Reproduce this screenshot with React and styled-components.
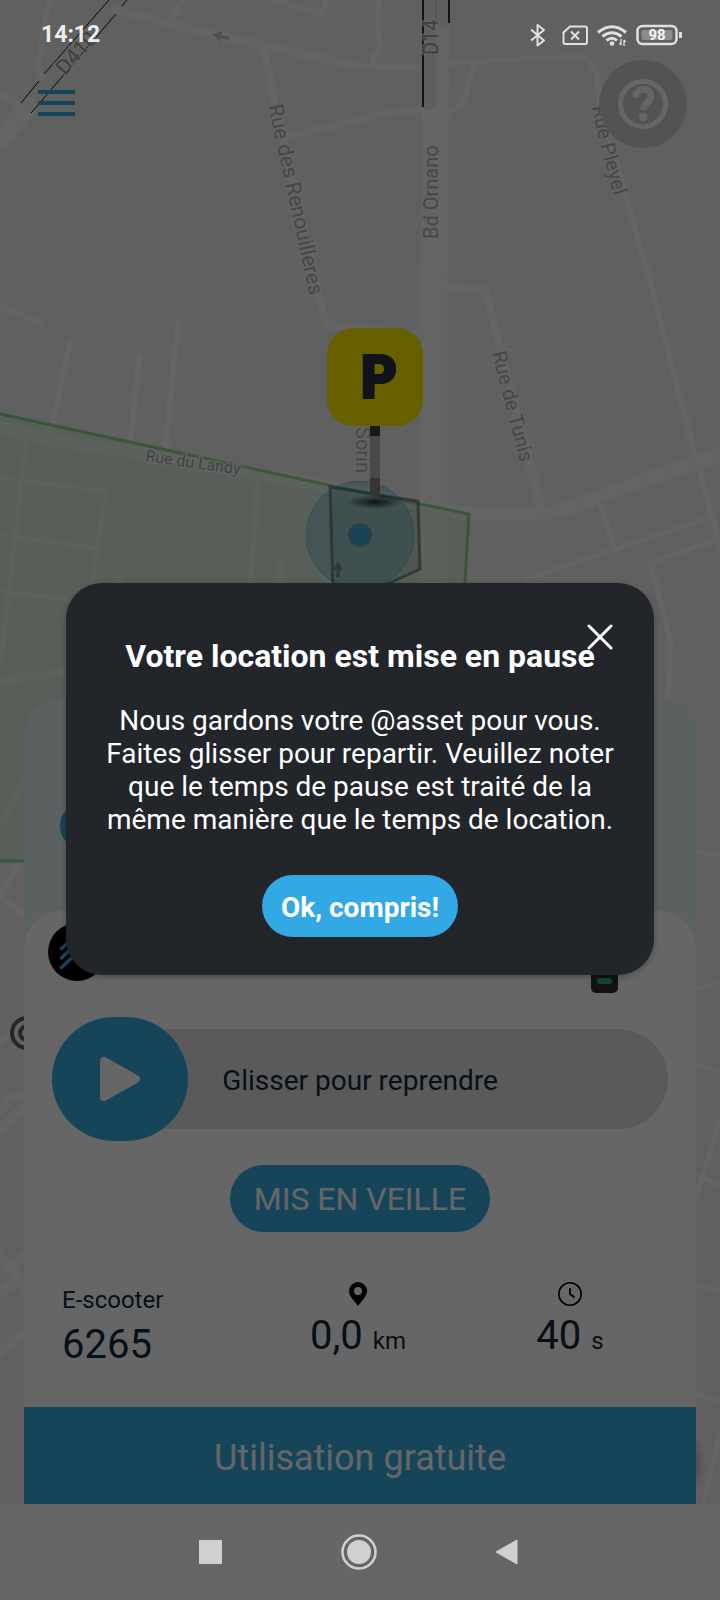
import React, { useState } from "react";
import styled, { createGlobalStyle } from "styled-components";

const GlobalStyle = createGlobalStyle`
  * {
    box-sizing: border-box;
  }

  body {
    margin: 0;
    font-family: Roboto, "Noto Sans", sans-serif;
    background: #ffffff;
  }

  button {
    border: 0;
    padding: 0;
    font-family: inherit;
    cursor: pointer;
  }
`;

const Screen = styled.div`
  display: grid;
  grid-template-columns: minmax(0, 1fr);
  grid-template-rows: 54px 1fr 96px;
  min-height: 100vh;
`;

const MapCanvas = styled.svg`
  grid-area: 1 / 1 / 3 / 2;
  display: block;
  width: 100%;
  height: 0;
  min-height: 100%;
  background: #f1f1f1;
`;

const Content = styled.main`
  grid-area: 2 / 1;
  display: flex;
  flex-direction: column;
  justify-content: space-between;
`;

const TopBar = styled.header`
  display: flex;
  align-items: center;
  justify-content: space-between;
  padding: 6px 33px 0 38px;
`;

const MenuButton = styled.button`
  display: flex;
  flex-direction: column;
  gap: 7px;
  width: 37px;
  padding-bottom: 2px;
  background: none;

  span {
    width: 100%;
    height: 4px;
    background: #32a8e4;
  }
`;

const HelpButton = styled.button`
  display: grid;
  place-items: center;
  width: 88px;
  height: 88px;
  border-radius: 50%;
  background: #d0d0d0;
`;

const Sheet = styled.section`
  margin: 0 24px;
  border-radius: 36px 36px 0 0;
  background: #e4f1f2;
`;

const SheetHead = styled.div`
  padding: 104px 36px 61px;
`;

const Dot = styled.div`
  width: 48px;
  height: 48px;
  border-radius: 50%;
  background: #38ace2;
`;

const Card = styled.div`
  display: flex;
  flex-direction: column;
  gap: 24px;
  padding-top: 12px;
  border-radius: 36px 36px 0 0;
  background: #ffffff;
`;

const VehicleRow = styled.div`
  display: flex;
  align-items: flex-start;
  justify-content: space-between;
  padding: 0 78px 0 24px;
`;

const Swipe = styled.div`
  display: grid;
  align-items: center;
  margin: 0 28px;

  > * {
    grid-area: 1 / 1;
  }

  label,
  svg {
    pointer-events: none;
  }

  label {
    justify-self: center;
    padding-top: 2px;
    font-size: 28px;
    line-height: 33px;
    color: #0f2840;
  }

  svg {
    margin-left: 44px;
  }
`;

const SwipeInput = styled.input`
  appearance: none;
  width: 100%;
  height: 124px;
  margin: 0;
  background: transparent;

  &::-webkit-slider-runnable-track {
    height: 100px;
    border-radius: 50px;
    background: #e1e1e1;
  }

  &::-webkit-slider-thumb {
    appearance: none;
    width: 136px;
    height: 124px;
    margin-top: -12px;
    border-radius: 62px;
    background: #38ace2;
  }
`;

const StateBadge = styled.div`
  align-self: center;
  padding: 15px 24px 14px;
  border-radius: 34px;
  background: #38ace2;
  color: #ffffff;
  font-size: 32px;
  line-height: 38px;
`;

const Stats = styled.div`
  display: grid;
  grid-template-columns: repeat(3, 1fr);
  padding: 26px 20px 39px 16px;
  color: #0f2840;
`;

const Stat = styled.div`
  display: flex;
  flex-direction: column;
  align-items: ${({ $start }) => ($start ? "flex-start" : "center")};
  gap: ${({ $start }) => ($start ? "8px" : "7px")};
  padding: ${({ $start }) => ($start ? "4px 0 0 22px" : "0")};
`;

const StatLabel = styled.div`
  font-size: 24px;
  line-height: 28px;
`;

const StatValue = styled.div`
  font-size: 40px;
  line-height: 46px;

  small {
    font-size: 24px;
  }
`;

const FreeButton = styled.button`
  display: block;
  width: 100%;
  height: 97px;
  padding-top: 4px;
  background: #38ace2;
  color: #ffffff;
  font-size: 36px;
  line-height: 42px;
`;

const NavBackground = styled.div`
  grid-area: 3 / 1;
  background: #ffffff;
`;

const Scrim = styled.div`
  grid-area: 1 / 1 / 4 / 2;
  background: rgba(0, 0, 0, 0.6);
`;

const StatusBar = styled.div`
  grid-area: 1 / 1;
  display: flex;
  align-items: center;
  justify-content: space-between;
  padding: 16px 37px 0 41px;
  color: #ececec;
`;

const Clock = styled.time`
  font-size: 23px;
  font-weight: 700;
  line-height: 28px;
`;

const StatusIcons = styled.div`
  display: flex;
  align-items: center;
`;

const NavBar = styled.nav`
  grid-area: 3 / 1;
  display: flex;
  align-items: center;
  justify-content: center;
  gap: 110px;
  padding-right: 2px;

  button {
    display: grid;
    place-items: center;
    width: 38px;
    height: 38px;
    background: none;
  }
`;

const Dialog = styled.div`
  grid-area: 2 / 1;
  align-self: center;
  display: grid;
  justify-items: center;
  margin: 0 66px;
  padding: 54px 36px 38px;
  border-radius: 36px;
  background: #22252a;
  color: #ffffff;
  text-align: center;
  box-shadow: 0 2px 6px rgba(0, 0, 0, 0.25);

  h1 {
    grid-area: 1 / 1;
    margin: 0;
    font-size: 32px;
    font-weight: 700;
    line-height: 38px;
  }

  p {
    margin: 29px 0 39px;
    font-size: 28px;
    line-height: 33px;
  }
`;

const CloseButton = styled.button`
  grid-area: 1 / 1;
  justify-self: end;
  display: grid;
  place-items: center;
  width: 36px;
  height: 36px;
  margin-top: -18px;
  background: none;
`;

const ConfirmButton = styled.button`
  padding: 2px 19px 0;
  height: 62px;
  border-radius: 31px;
  background: #32a8e4;
  color: #ffffff;
  font-size: 28px;
  font-weight: 700;
  line-height: 33px;
`;

const roads = [
  { w: 18, d: "M28 106 L0 142" },
  { w: 8, d: "M0 92 L22 107" },
  { w: 8, d: "M117 10 L168 24 L262 45 L362 67" },
  { w: 6, d: "M169 22 L184 0" },
  { w: 6, d: "M49 0 L38 68 L43 77" },
  { w: 8, d: "M263 45 L275 103 L318 293 L326 322 Q328 325 334 325 L424 335" },
  { w: 6, d: "M284 137 L360 120 L385 113 L425 110" },
  { w: 6, d: "M265 -3 L316 13 Q322 14 324 8 L326 0" },
  { w: 4, d: "M380 0 L377 16 L380 50 L373 56 V66" },
  { w: 4, d: "M360 67 H424" },
  { w: 27, d: "M436 27 L434 300 V600" },
  { w: 6, d: "M448 63 L475 61 L587 57 L596 72 L601 105 L626 197 L655 300 L695 455 L720 545" },
  { w: 6, d: "M475 61 L465 97 Q461 107 447 113" },
  { w: 8, d: "M447 288 L485 290 L500 350 L529 460 L541 508" },
  { w: 13, d: "M-4 426 L50 440 L160 456 L330 487 L420 505 Q480 520 550 512 Q575 508 610 492 L724 453" },
  { w: 6, d: "M598 498 L615 550" },
  { w: 4, d: "M526 579 L615 549 L708 518" },
  { w: 5, d: "M716 540 L650 563 L671 642 L668 700" },
  { w: 6, d: "M-4 304 L42 323" },
  { w: 6, d: "M70 342 L50 436" },
  { w: 6, d: "M139 357 L130 448" },
  { w: 6, d: "M178 323 L165 454" },
  { w: 4, d: "M26 441 L8 600 L0 667" },
  { w: 4, d: "M0 478 L106 491 L92 585" },
  { w: 4, d: "M0 535 L96 548" },
  { w: 4, d: "M0 591 L70 600" },
  { w: 6, d: "M258 481 L249 600" },
  { w: 6, d: "M281 562 L279 600" },
  { w: 5, d: "M120 577 L118 600" },
  { w: 8, d: "M0 682 Q40 672 80 673" },
  { w: 6, d: "M0 826 L30 770" },
  { w: 6, d: "M22 858 L0 895 L28 918" },
  { w: 6, d: "M0 1042 L26 1022" },
  { w: 8, d: "M0 1130 L26 1105 M0 1112 L10 1098 L26 1094" },
  { w: 9, d: "M-4 1250 L28 1294 M28 1252 L8 1270 M0 1292 L12 1284" },
  { w: 9, d: "M-4 1356 L28 1330" },
  { w: 4, d: "M694 852 L720 855 M694 989 L720 982 M694 1064 L720 1072" },
  { w: 4, d: "M720 1120 L706 1165 L694 1205 M694 1175 L720 1185" },
  { w: 4, d: "M694 1283 L720 1292 M694 1393 L720 1402 M720 1432 L704 1502" },
];

const labels = [
  { id: "d410", text: "D410", size: 21, color: "#9c9c9c", d: "M65 76 L115 21" },
  { id: "d14", text: "D14", size: 20, color: "#9c9c9c", d: "M438 55 V0" },
  { id: "renouilleres", text: "Rue des Renouilleres", size: 21, color: "#b2b2b2", d: "M268 106 Q286 185 317 330" },
  { id: "ornano", text: "Bd Ornano", size: 20, color: "#b2b2b2", d: "M438 239 V100" },
  { id: "pleyel", text: "Rue Pleyel", size: 20, color: "#b2b2b2", d: "M592 107 Q600 150 624 230" },
  { id: "tunis", text: "Rue de Tunis", size: 20, color: "#b2b2b2", d: "M492 353 L530 500" },
  { id: "landy", text: "Rue du Landy", size: 16, color: "#a8a8a8", d: "M145 461 L250 476" },
  { id: "sorin", text: "Sorin", size: 20, color: "#b2b2b2", d: "M356 427 V520" },
];

const CityMap = () => (
  <MapCanvas
    viewBox="0 0 720 1504"
    preserveAspectRatio="xMidYMin slice"
    role="img"
    aria-label="Plan du quartier"
  >
    <defs>
      <radialGradient id="pinShadow">
        <stop offset="0" stopColor="#000" stopOpacity="0.75" />
        <stop offset="1" stopColor="#000" stopOpacity="0" />
      </radialGradient>
      <radialGradient id="fabShadow">
        <stop offset="0.75" stopColor="#000" stopOpacity="0.2" />
        <stop offset="1" stopColor="#000" stopOpacity="0" />
      </radialGradient>
    </defs>

    <g fill="none" stroke="#fbfbfb" strokeLinecap="round" strokeLinejoin="round">
      {roads.map((road) => (
        <path key={road.d} d={road.d} strokeWidth={road.w} />
      ))}
    </g>

    {/* tram lines */}
    <path d="M424 0 H436 V110 H424 Z M436 0 H448 V27 H436 Z" fill="#ebebeb" />
    <path
      d="M109 0 L44 74 M39 81 L21 103 M127 0 L122 6 M116 14 L31 113"
      fill="none"
      stroke="#111"
      strokeWidth="1"
    />
    <path d="M423 0 V107 M449 0 V23" fill="none" stroke="#333" strokeWidth="2" />
    <path d="M436 0 V24" stroke="#bbb" strokeWidth="1" />

    <path
      d="M-4 413 L333 486 L469 514 L464 600 V861 H-4 Z"
      fill="#50d050"
      fillOpacity="0.13"
      stroke="#3fb83f"
      strokeOpacity="0.5"
      strokeWidth="3"
    />

    {labels.map(({ id, text, size, color, d }) => (
      <g key={id}>
        <path id={id} d={d} fill="none" />
        <text
          fontSize={size}
          fill={color}
          stroke="#fafafa"
          strokeOpacity="0.6"
          strokeWidth="4"
          paintOrder="stroke"
        >
          <textPath href={"#" + id}>{text}</textPath>
        </text>
      </g>
    ))}

    <path d="M212 34 L223 31 L221 35 L229 37 L228 40 L220 38 L221 42 Z" fill="#c4c4c4" />

    <path
      d="M330 487 L418 501 L420 569 L370 592 H333 Z"
      fill="#607870"
      fillOpacity="0.15"
      stroke="#202c2c"
      strokeOpacity="0.45"
      strokeWidth="3"
    />
    <circle
      cx="360"
      cy="535"
      r="54"
      fill="#2090c0"
      fillOpacity="0.25"
      stroke="#2090c0"
      strokeOpacity="0.35"
    />
    <path d="M338 561 L343 570 H340 V577 H336 V570 H333 Z" fill="#7c9494" />
    <ellipse cx="375" cy="502" rx="28" ry="7" fill="url(#pinShadow)" />
    <circle cx="360" cy="535" r="12" fill="#000" fillOpacity="0.2" />
    <circle cx="360" cy="535" r="10" fill="#38ace2" />

    {/* parking pin */}
    <path d="M370 425 H380 V437 H370 Z" fill="#404040" />
    <path d="M370 436 H380 V478 H370 Z" fill="#b4b6b8" />
    <path d="M370 478 H380 V493 L375 499 L370 493 Z" fill="#838583" />
    <rect x="327" y="328" width="96" height="98" rx="26" fill="#ffef00" />
    <text
      x="359"
      y="398"
      fontFamily="DejaVu Sans Condensed, DejaVu Sans, sans-serif"
      fontSize="58"
      fontWeight="700"
      fill="#28303e"
      stroke="#28303e"
      strokeWidth="2"
    >
      P
    </text>

    <g fill="none" stroke="#606060" strokeWidth="4">
      <circle cx="27" cy="1033" r="15" />
      <circle cx="27" cy="1033" r="7" />
    </g>
    <circle cx="660" cy="1463" r="46" fill="url(#fabShadow)" />
  </MapCanvas>
);

const App = () => {
  const [open, setOpen] = useState(true);

  return (
    <>
      <GlobalStyle />
      <Screen>
        <CityMap />
        <Content>
          <TopBar>
            <MenuButton aria-label="Menu">
              <span />
              <span />
              <span />
            </MenuButton>
            <HelpButton aria-label="Aide">
              <svg width="52" height="52" viewBox="0 0 52 52" fill="none" stroke="#fff">
                <circle cx="26" cy="26" r="22.5" strokeWidth="5" />
                <path
                  d="M18.500 19.500 C19 8.500 34 9 34 18 C34 25 26.500 24 26.500 32"
                  strokeWidth="6.500"
                />
                <circle cx="26" cy="39" r="4.2" fill="#fff" stroke="none" />
              </svg>
            </HelpButton>
          </TopBar>

          <Sheet>
            <SheetHead>
              <Dot />
            </SheetHead>
            <Card>
              <VehicleRow>
                <svg width="58" height="58" viewBox="0 0 58 58">
                  <circle cx="29" cy="29" r="29" fill="#000" />
                  <path
                    d="M13.500 25.500 L22 18 M13.500 35 L26 23 M13.500 44.500 L30 29"
                    stroke="#38ace2"
                    strokeWidth="3.500"
                    strokeLinecap="round"
                  />
                </svg>
                <svg width="27" height="70" viewBox="0 0 27 70">
                  <rect width="27" height="70" rx="5" fill="#2e2e2e" />
                  <rect x="6" y="55" width="15" height="6" rx="3" fill="#2fae70" />
                </svg>
              </VehicleRow>

              <Swipe>
                <SwipeInput id="resume" type="range" min="0" max="100" defaultValue="0" />
                <label htmlFor="resume">Glisser pour reprendre</label>
                <svg width="48" height="48" viewBox="0 0 48 48">
                  <path
                    d="M8 6 V42 L40 24 Z"
                    fill="#fff"
                    stroke="#fff"
                    strokeWidth="8"
                    strokeLinejoin="round"
                  />
                </svg>
              </Swipe>

              <StateBadge>MIS EN VEILLE</StateBadge>

              <Stats>
                <Stat $start>
                  <StatLabel>E-scooter</StatLabel>
                  <StatValue>6265</StatValue>
                </Stat>
                <Stat>
                  <svg width="18" height="24" viewBox="0 0 18 24">
                    <path
                      d="M9 0 A9 9 0 0 0 0 9 C0 15 6 19 9 24 C12 19 18 15 18 9 A9 9 0 0 0 9 0 Z M9 5 A4 4 0 1 1 9 13 A4 4 0 1 1 9 5 Z"
                      fill="#000"
                      fillRule="evenodd"
                    />
                  </svg>
                  <StatValue>
                    0,0 <small>km</small>
                  </StatValue>
                </Stat>
                <Stat>
                  <svg width="24" height="24" viewBox="0 0 24 24" fill="none" stroke="#000">
                    <circle cx="12" cy="12" r="11.200" strokeWidth="1.600" />
                    <path d="M12 6 V12 L16.500 15.500" strokeWidth="1.800" />
                  </svg>
                  <StatValue>
                    40 <small>s</small>
                  </StatValue>
                </Stat>
              </Stats>
            </Card>
            <FreeButton>Utilisation gratuite</FreeButton>
          </Sheet>
        </Content>
        <NavBackground />

        {open && <Scrim />}

        <StatusBar>
          <Clock>14:12</Clock>
          <StatusIcons>
            <svg width="105" height="24" viewBox="0 0 105 24" fill="none" stroke="#e0e0e0">
              {/* bluetooth */}
              <path
                d="M1 6.500 L14 17.500 L7.500 22.500 V2 L14 7 L1 17.500"
                strokeWidth="2"
                strokeLinejoin="round"
              />
              {/* no sim */}
              <path
                d="M40 3.500 H55 Q57 3.500 57 5.500 V19 Q57 21 55 21 H35.500 Q33.500 21 33.500 19 V9.500 Z"
                strokeWidth="2"
              />
              <path d="M41 8.500 L49 16.500 M49 8.500 L41 16.500" strokeWidth="2" />
              {/* wifi */}
              <path d="M68 9.500 Q82 -2 96 9.500" strokeWidth="3" />
              <path d="M72.500 13.500 Q82 6 91.500 13.500" strokeWidth="3" />
              <path d="M76.500 17.500 Q82 13 87 17.500" strokeWidth="3" />
              <circle cx="82" cy="20.500" r="2.300" fill="#e0e0e0" stroke="none" />
              <path d="M91 16 V22 M89.500 20 L91 22 M94 23 V17 M95.500 19 L94 17" strokeWidth="1.300" />
            </svg>
            {/* battery */}
            <svg width="48" height="24" viewBox="0 0 48 24">
              <rect x="2.500" y="3" width="39" height="18" rx="5" fill="none" stroke="#e0e0e0" strokeWidth="2.500" />
              <rect x="6.500" y="7" width="31" height="10" rx="2" fill="#8c8c8c" />
              <path d="M44 9 H47 V15 H44 Z" fill="#e0e0e0" />
              <text x="22" y="17" textAnchor="middle" fontSize="15" fontWeight="700" fill="#f4f4f4">
                98
              </text>
            </svg>
          </StatusIcons>
        </StatusBar>

        {open && (
          <Dialog role="dialog" aria-modal="true" aria-labelledby="pause-title">
            <h1 id="pause-title">Votre location est mise en pause</h1>
            <CloseButton aria-label="Fermer" onClick={() => setOpen(false)}>
              <svg width="26" height="26" viewBox="0 0 26 26">
                <path d="M2 2 L24 24 M24 2 L2 24" stroke="#fff" strokeWidth="3" strokeLinecap="round" />
              </svg>
            </CloseButton>
            <p>
              Nous gardons votre @asset pour vous. Faites glisser pour repartir.
              Veuillez noter que le temps de pause est traité de la même manière
              que le temps de location.
            </p>
            <ConfirmButton onClick={() => setOpen(false)}>Ok, compris!</ConfirmButton>
          </Dialog>
        )}

        <NavBar>
          <button aria-label="Applications récentes">
            <svg width="24" height="24" viewBox="0 0 24 24">
              <rect width="23" height="24" rx="1" fill="#d0d0d0" />
            </svg>
          </button>
          <button aria-label="Accueil">
            <svg width="36" height="36" viewBox="0 0 36 36">
              <circle cx="18" cy="18" r="16.500" fill="none" stroke="#d0d0d0" strokeWidth="2.500" />
              <circle cx="18" cy="18" r="12" fill="#d0d0d0" />
            </svg>
          </button>
          <button aria-label="Retour">
            <svg width="24" height="26" viewBox="0 0 24 26">
              <path d="M22 1 V25 L1 13 Z" fill="#d0d0d0" stroke="#d0d0d0" strokeLinejoin="round" />
            </svg>
          </button>
        </NavBar>
      </Screen>
    </>
  );
};

export default App;
